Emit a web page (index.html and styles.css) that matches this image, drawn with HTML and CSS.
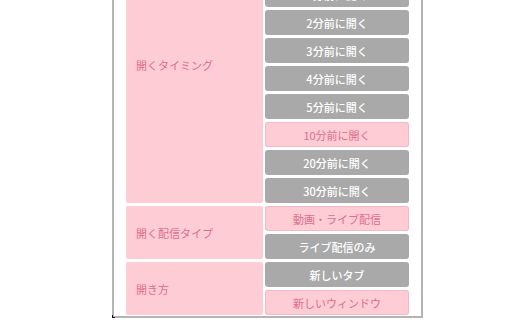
FILE: index.html
```html
<!DOCTYPE html>
<html lang="ja">
<head>
<meta charset="utf-8">
<link rel="stylesheet" href="styles.css">
</head>
<body>
<div class="frame">
  <div class="settings">
    <div class="row">
      <div class="label">開くタイミング</div>
      <div class="options">
        <div class="btn">開始時に開く</div>
        <div class="btn">0分前に開く</div>
        <div class="btn">1分前に開く</div>
        <div class="btn">2分前に開く</div>
        <div class="btn">3分前に開く</div>
        <div class="btn">4分前に開く</div>
        <div class="btn">5分前に開く</div>
        <div class="btn on">10分前に開く</div>
        <div class="btn">20分前に開く</div>
        <div class="btn">30分前に開く</div>
      </div>
    </div>
    <div class="row">
      <div class="label">開く配信タイプ</div>
      <div class="options">
        <div class="btn on">動画・ライブ配信</div>
        <div class="btn">ライブ配信のみ</div>
      </div>
    </div>
    <div class="row">
      <div class="label">開き方</div>
      <div class="options">
        <div class="btn">新しいタブ</div>
        <div class="btn on">新しいウィンドウ</div>
      </div>
    </div>
  </div>
</div>
</body>
</html>
```
FILE: styles.css
```css
html, body {
  margin: 0;
  padding: 0;
  background: #ffffff;
  overflow: hidden;
}
body {
  font-family: "Noto Sans CJK JP", "Noto Sans", sans-serif;
  font-size: 11px;
}
.frame {
  position: relative;
  box-sizing: border-box;
  width: 311px;
  margin-left: 112px;
  margin-top: -74px;
  padding: 0 12px 1px 12px;
  border-left: 2px solid #b4b4b4;
  border-right: 2px solid #b4b4b4;
  border-bottom: 2px solid #b4b4b4;
  background: #ffffff;
}
.frame::after {
  content: "";
  position: absolute;
  left: -2px;
  bottom: -2px;
  width: 3px;
  height: 3px;
  border-left: 1px solid #111;
  border-bottom: 1px solid #111;
  box-sizing: border-box;
}
.settings {
  display: flex;
  flex-direction: column;
  gap: 3px;
}
.row {
  display: flex;
  gap: 2px;
}
.label {
  width: 137px;
  flex: none;
  background: #fdccd4;
  border-radius: 2px;
  color: #dc6f8c;
  display: flex;
  align-items: center;
  padding-left: 10px;
  box-sizing: border-box;
}
.options {
  flex: 1;
  display: flex;
  flex-direction: column;
  gap: 3px;
}
.btn {
  height: 25px;
  background: #a9a9a9;
  color: #ffffff;
  font-weight: 500;
  border-radius: 3px;
  display: flex;
  align-items: center;
  justify-content: center;
}
.btn.on {
  background: #fdccd4;
  color: #dc6f8c;
  font-weight: normal;
  box-shadow: inset 0 0 0 1px rgba(230, 150, 170, 0.35);
}
```
